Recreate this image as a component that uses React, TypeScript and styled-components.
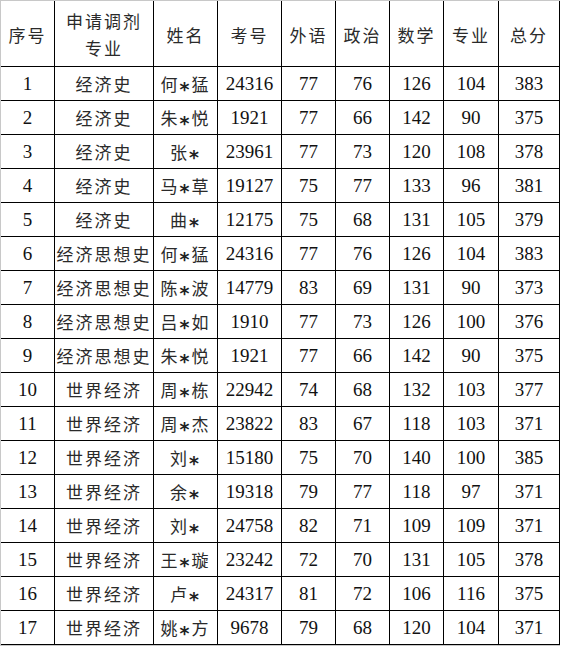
import React from "react";
import styled, { createGlobalStyle } from "styled-components";

const Global = createGlobalStyle`
  html, body { margin: 0; padding: 0; background: #ffffff; }
  body { font-family: "Liberation Serif", "Noto Sans CJK SC", serif; }
`;

const Sheet = styled.div`
  width: 560px;
  box-sizing: border-box;
  border-left: 1px solid #c8c8c8;
  border-top: 1px solid #c8c8c8;
  border-bottom: 1px solid #c8c8c8;
  display: grid;
  grid-template-columns: 54px 99px 64px 64px 54px 54px 54px 55px 61px;
  grid-template-rows: 66px;
  grid-auto-rows: 34px;
`;

const Cell = styled.div<{ $kind: "cn" | "num" }>`
  box-sizing: border-box;
  border-right: 1px solid #000;
  border-bottom: 1px solid #000;
  display: flex;
  align-items: center;
  justify-content: center;
  text-align: center;
  white-space: nowrap;
  color: ${(p) => (p.$kind === "cn" ? "#2a2a2a" : "#111")};
  font-family: ${(p) =>
    p.$kind === "cn"
      ? `"Noto Sans CJK SC", "Liberation Serif", sans-serif`
      : `"Liberation Serif", "Noto Sans CJK SC", serif`};
  font-size: ${(p) => (p.$kind === "cn" ? "17px" : "19px")};
  letter-spacing: ${(p) => (p.$kind === "cn" ? "2px" : "0")};
  font-weight: 400;
  line-height: 26px;
  padding-top: 1px;
`;

const HeadCell = styled(Cell)`
  flex-direction: column;
  line-height: 27px;
`;

const Star = styled.span`
  display: inline-block;
  font-family: "DejaVu Sans", sans-serif;
  font-size: 19px;
  font-weight: 700;
  letter-spacing: 0;
  margin: 0 2px 0 0;
  transform: translateY(5px);
  color: #222;
`;

const headers: string[][] = [
  ["序号"],
  ["申请调剂", "专业"],
  ["姓名"],
  ["考号"],
  ["外语"],
  ["政治"],
  ["数学"],
  ["专业"],
  ["总分"],
];

type Row = [string, string, string, string, string, string, string, string, string];

const rows: Row[] = [
  ["1", "经济史", "何*猛", "24316", "77", "76", "126", "104", "383"],
  ["2", "经济史", "朱*悦", "1921", "77", "66", "142", "90", "375"],
  ["3", "经济史", "张*", "23961", "77", "73", "120", "108", "378"],
  ["4", "经济史", "马*草", "19127", "75", "77", "133", "96", "381"],
  ["5", "经济史", "曲*", "12175", "75", "68", "131", "105", "379"],
  ["6", "经济思想史", "何*猛", "24316", "77", "76", "126", "104", "383"],
  ["7", "经济思想史", "陈*波", "14779", "83", "69", "131", "90", "373"],
  ["8", "经济思想史", "吕*如", "1910", "77", "73", "126", "100", "376"],
  ["9", "经济思想史", "朱*悦", "1921", "77", "66", "142", "90", "375"],
  ["10", "世界经济", "周*栋", "22942", "74", "68", "132", "103", "377"],
  ["11", "世界经济", "周*杰", "23822", "83", "67", "118", "103", "371"],
  ["12", "世界经济", "刘*", "15180", "75", "70", "140", "100", "385"],
  ["13", "世界经济", "余*", "19318", "79", "77", "118", "97", "371"],
  ["14", "世界经济", "刘*", "24758", "82", "71", "109", "109", "371"],
  ["15", "世界经济", "王*璇", "23242", "72", "70", "131", "105", "378"],
  ["16", "世界经济", "卢*", "24317", "81", "72", "106", "116", "375"],
  ["17", "世界经济", "姚*方", "9678", "79", "68", "120", "104", "371"],
];

function Name({ value }: { value: string }) {
  const [first, rest] = value.split("*");
  return (
    <span>
      {first}
      <Star>*</Star>
      {rest}
    </span>
  );
}

export default function App() {
  return (
    <>
      <Global />
      <Sheet>
        {headers.map((lines, i) => (
          <HeadCell key={`h${i}`} $kind="cn">
            {lines.map((l) => (
              <span key={l}>{l}</span>
            ))}
          </HeadCell>
        ))}
        {rows.map((r, ri) =>
          r.map((v, ci) => (
            <Cell key={`${ri}-${ci}`} $kind={ci === 1 || ci === 2 ? "cn" : "num"}>
              {ci === 2 ? <Name value={v} /> : v}
            </Cell>
          ))
        )}
      </Sheet>
    </>
  );
}
